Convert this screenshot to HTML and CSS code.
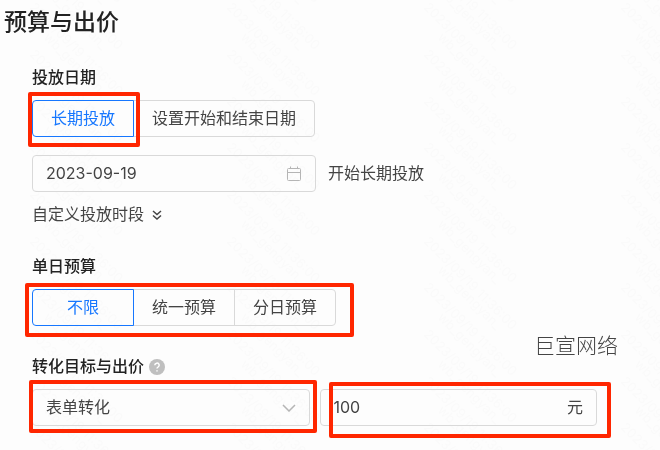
FILE: index.html
```html
<!DOCTYPE html>
<html lang="zh-CN">
<head>
    <meta charset="UTF-8">
    <meta name="viewport" content="width=device-width, initial-scale=1.0">
    <title>预算与出价</title>
    <link rel="stylesheet" href="styles.css">
</head>
<body>
    <!-- Repeating user stamp behind the form -->
    <svg class="stamp" width="100%" height="100%" aria-hidden="true">
        <defs>
            <g id="stampText">
                <text transform="translate(2 8) rotate(45)">2023/09/19 11:36:00</text>
                <text transform="translate(16 -9) rotate(45)">wb_gengyan_</text>
            </g>
            <pattern id="stampTile" x="27" y="0" width="197" height="140" patternUnits="userSpaceOnUse">
                <use href="#stampText" y="-93"/>
                <use href="#stampText" y="-46"/>
                <use href="#stampText"/>
                <use href="#stampText" y="47"/>
                <use href="#stampText" y="94"/>
                <use href="#stampText" y="140"/>
            </pattern>
        </defs>
        <rect width="100%" height="100%" fill="url(#stampTile)"/>
    </svg>
    <h1>预算与出价</h1>
    <form class="budget-form">
        <fieldset class="section">
            <legend>投放日期</legend>
            <div class="segmented mark mark-date">
                <label><input type="radio" name="period" checked><span>长期投放</span></label>
                <label><input type="radio" name="period"><span>设置开始和结束日期</span></label>
            </div>
            <div class="date-row">
                <div class="field date-field">
                    <input type="text" id="startDate" value="2023-09-19">
                    <svg class="calendar" viewBox="0 0 16 16" width="16" height="16" aria-hidden="true">
                        <path d="M2.500 2.500h11a1 1 0 0 1 1 1v10a1 1 0 0 1-1 1h-11a1 1 0 0 1-1-1v-10a1 1 0 0 1 1-1zM1.500 6.500h13M4.500 .5v2M11.500 .5v2"/>
                    </svg>
                </div>
                <label for="startDate">开始长期投放</label>
            </div>
            <a class="more" href="#">自定义投放时段
                <svg viewBox="0 0 10 10" width="10" height="10" aria-hidden="true">
                    <path d="M1 1l4 3.500L9 1M1 5.500L5 9l4-3.500"/>
                </svg>
            </a>
        </fieldset>

        <fieldset class="section">
            <legend>单日预算</legend>
            <div class="segmented equal mark mark-budget">
                <label><input type="radio" name="budget" checked><span>不限</span></label>
                <label><input type="radio" name="budget"><span>统一预算</span></label>
                <label><input type="radio" name="budget"><span>分日预算</span></label>
            </div>
        </fieldset>

        <fieldset class="section">
            <legend>转化目标与出价
                <svg class="help" viewBox="0 0 16 16" width="16" height="16" aria-hidden="true">
                    <circle cx="8" cy="8" r="8"/>
                    <path d="M5.800 6.300a2.200 2.100 0 1 1 3.200 1.800q-1 .5-1 1.500M8 11.300v1.200"/>
                </svg>
            </legend>
            <div class="bid-row">
                <div class="field mark mark-target">
                    <select aria-label="转化目标">
                        <option>表单转化</option>
                    </select>
                    <svg class="arrow" viewBox="0 0 14 8" width="14" height="8" aria-hidden="true">
                        <path d="M1 1l6 6 6-6"/>
                    </svg>
                </div>
                <div class="field mark mark-bid">
                    <input type="text" id="bid" value="100" aria-label="出价">
                    <label for="bid">元</label>
                </div>
            </div>
        </fieldset>
    </form>
    <div class="watermark">巨宣网络</div>
</body>
</html>
```

FILE: styles.css
```css
*,
*::after {
    box-sizing: border-box;
}
body {
    position: relative;
    margin: 0;
    background-color: #fdfdfd;
    color: #444;
    font-family: Inter, "Noto Sans CJK SC", sans-serif;
    font-size: 16px;
    line-height: 23px;
}
h1 {
    margin: 0;
    padding: 6px 4px 0;
    color: #222;
    font-size: 23px;
    font-weight: 500;
    line-height: 32px;
}
.budget-form {
    padding: 28px 63px 24px 32px;
}
.section {
    min-width: 0;
    margin: 0 0 29px;
    padding: 0;
    border: none;
}
.section:last-child {
    margin-bottom: 0;
}
legend {
    display: flex;
    align-items: center;
    gap: 5px;
    padding: 0 0 11px;
    color: #222;
    font-weight: 500;
}
input,
select {
    font: inherit;
    color: inherit;
}

/* Button-like radio groups */
.segmented {
    display: flex;
    width: fit-content;
}
.segmented label {
    position: relative;
    cursor: pointer;
}
.segmented label + label {
    margin-left: -1px;
}
.segmented input {
    position: absolute;
    opacity: 0;
}
.segmented span {
    display: block;
    padding: 6px 18px;
    border: 1px solid #d9d9d9;
    text-align: center;
}
.segmented label:first-child span {
    border-radius: 4px 0 0 4px;
}
.segmented label:last-child span {
    border-radius: 0 4px 4px 0;
}
.segmented input:checked + span {
    position: relative;
    z-index: 1;
    border-color: #1677ff;
    color: #1677ff;
}
.equal label {
    min-width: 102px;
}

/* Text boxes and the drop-down */
.field {
    display: flex;
    align-items: center;
    min-width: 0;
    height: 37px;
    padding: 0 13px;
    border: 1px solid #d9d9d9;
    border-radius: 4px;
}
.field input,
.field select {
    flex: 1;
    min-width: 0;
    padding: 0;
    border: none;
    outline: none;
    background: none;
    appearance: none;
}
.date-row {
    display: flex;
    align-items: center;
    gap: 12px;
    margin: 18px 0 11px;
}
.date-field {
    flex: 0 1 284px;
}
.more {
    display: flex;
    align-items: center;
    gap: 8px;
    width: fit-content;
    color: inherit;
    text-decoration: none;
}
.bid-row {
    display: flex;
    gap: 10px;
}
.bid-row .field {
    flex: 1;
}

svg {
    fill: none;
    stroke: #444;
}
.more svg {
    stroke-width: 1.5;
}
.calendar,
.arrow {
    stroke: #b5b5b5;
}
.arrow {
    stroke-width: 1.5;
}
.help {
    stroke: #fff;
    stroke-width: 1.5;
}
.help circle {
    fill: #bfbfbf;
    stroke: none;
}

/* Red highlight frames */
.mark {
    position: relative;
}
.mark::after {
    content: "";
    position: absolute;
    z-index: 2;
    border: 4px solid #ff2600;
    border-radius: 2px;
    pointer-events: none;
}
.mark-date::after {
    inset: -8px auto -10px -4px;
    width: 112px;
}
.mark-budget::after {
    inset: -6px -18px -11px -7px;
}
.mark-target::after {
    inset: -10px -8px -8px -4px;
}
.mark-bid::after {
    inset: -8px -15px -13px 8px;
}

.stamp {
    position: fixed;
    inset: 0;
    z-index: -1;
    stroke: none;
}
.stamp text {
    fill: #fafafa;
    font-size: 13px;
}
.watermark {
    position: absolute;
    right: 42px;
    bottom: 88px;
    color: #444;
    font-size: 21px;
    font-weight: 300;
    line-height: 32px;
}
```
